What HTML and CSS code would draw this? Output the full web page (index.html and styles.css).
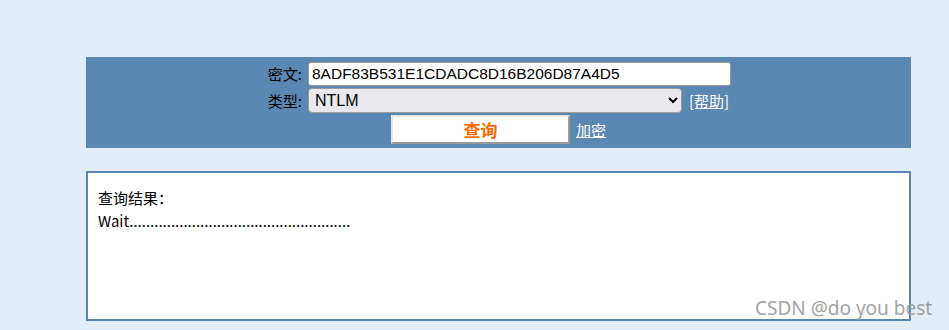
FILE: index.html
```html
<!DOCTYPE html>
<html lang="zh-CN">
<head>
  <meta charset="UTF-8">
  <title>NTLM 查询</title>
  <link rel="stylesheet" href="styles.css">
</head>
<body>
  <form class="panel" onsubmit="return false">
    <div class="row">
      <label>密文:</label>
      <input class="hash" type="text" value="8ADF83B531E1CDADC8D16B206D87A4D5">
    </div>
    <div class="row">
      <label>类型:</label>
      <select class="type">
        <option>NTLM</option>
      </select>
      <a class="link" href="#">[帮助]</a>
    </div>
    <div class="row btn-row">
      <button class="query-btn">查询</button>
      <a class="link" href="#">加密</a>
    </div>
  </form>

  <div class="result">
    <div class="result-title">查询结果：</div>
    <div>Wait.....................................................</div>
  </div>

  <div class="watermark">CSDN @do you best</div>
</body>
</html>
```

FILE: styles.css
```css
body {
  margin: 0;
  padding: 57px 0 0 86px;
  background: #e1eef7;
  font-family: "Noto Sans CJK SC", "Liberation Sans", sans-serif;
  font-size: 15px;
  color: #000;
  height: 330px;
  box-sizing: border-box;
  overflow: hidden;
}
.panel {
  width: 825px;
  background: #5b87b3;
  padding: 5px 0;
  box-sizing: border-box;
  height: 91px;
}
.row {
  display: flex;
  align-items: center;
  margin-bottom: 2px;
}
.row label {
  width: 216px;
  padding-right: 6px;
  text-align: right;
  font-size: 15px;
  line-height: 18px;
}
.hash {
  width: 423px;
  height: 24px;
  box-sizing: border-box;
  border: 1px solid #9a9a9a;
  border-radius: 3px;
  padding: 0 3px;
  font-family: "Liberation Sans", sans-serif;
  font-size: 15.5px;
}
.type {
  width: 374px;
  height: 25px;
  box-sizing: border-box;
  border: 1px solid #9a9a9a;
  border-radius: 4px;
  background: #e9e8ec;
  font-family: "Liberation Sans", sans-serif;
  font-size: 16px;
  padding: 0 2px;
  color: #000;
  margin-right: 7px;
}
.link {
  color: #fff;
  font-size: 15px;
  text-decoration: underline;
}
.btn-row {
  padding-left: 305px;
  gap: 6px;
}
.query-btn {
  width: 179px;
  height: 29px;
  background: #fff;
  border: 2px solid;
  border-color: #e6e6e6 #9a9a9a #9a9a9a #e6e6e6;
  color: #ff6a00;
  font-family: "Noto Sans CJK SC", sans-serif;
  font-weight: bold;
  font-size: 17px;
  padding: 0;
}
.result {
  width: 825px;
  height: 150px;
  box-sizing: border-box;
  margin-top: 23px;
  background: #fff;
  border: 2px solid #5b87b3;
  padding: 13px 10px;
  font-size: 15px;
  line-height: 23px;
}
.watermark {
  position: absolute;
  left: 755px;
  top: 295px;
  font-family: "Noto Sans", sans-serif;
  font-size: 19px;
  color: #999;
  opacity: 0.9;
}
```
